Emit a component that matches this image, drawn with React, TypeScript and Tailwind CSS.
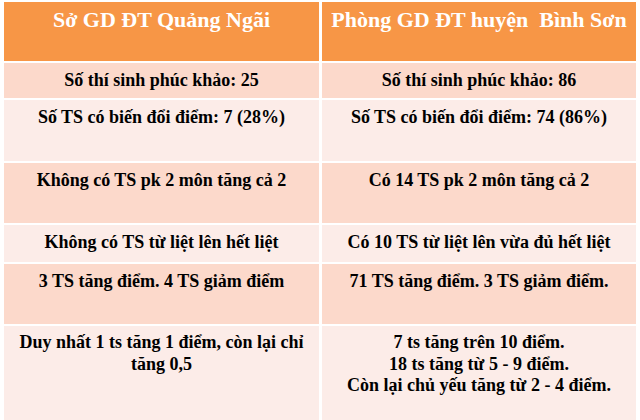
import React from "react";

const dark = "bg-[#fcd9cb]";
const light = "bg-[#fcece8]";

function Cell({ bg, children }: { bg: string; children: React.ReactNode }) {
  return (
    <div className={`${bg} text-center text-black text-[18px] leading-[22px] pt-[6px] px-2`}>
      {children}
    </div>
  );
}

export default function App() {
  return (
    <div className="w-[640px] h-[420px] overflow-hidden bg-white pt-[2px] pl-[4px] font-['Liberation_Serif','Times_New_Roman',serif] font-bold">
      <div className="grid grid-cols-[315px_314px] gap-x-[3px] gap-y-[2px] grid-rows-[59px_35px_61px_60px_37px_60px_100px]">
        <div className="bg-[#f79646] text-white text-center text-[22px] leading-[26px] pt-[5px]">
          Sở GD ĐT Quảng Ngãi
        </div>
        <div className="bg-[#f79646] text-white text-center text-[22px] leading-[26px] pt-[5px]">
          Phòng GD ĐT huyện&nbsp; Bình Sơn
        </div>

        <Cell bg={dark}>Số thí sinh phúc khảo: 25</Cell>
        <Cell bg={dark}>Số thí sinh phúc khảo: 86</Cell>

        <Cell bg={light}>Số TS có biến đổi điểm: 7 (28%)</Cell>
        <Cell bg={light}>Số TS có biến đổi điểm: 74 (86%)</Cell>

        <Cell bg={dark}>Không có TS pk 2 môn tăng cả 2</Cell>
        <Cell bg={dark}>Có 14 TS pk 2 môn tăng cả 2</Cell>

        <Cell bg={light}>Không có TS từ liệt lên hết liệt</Cell>
        <Cell bg={light}>Có 10 TS từ liệt lên vừa đủ hết liệt</Cell>

        <Cell bg={dark}>3 TS tăng điểm. 4 TS giảm điểm</Cell>
        <Cell bg={dark}>71 TS tăng điểm. 3 TS giảm điểm.</Cell>

        <div className={`${light} text-center text-black text-[18px] leading-[21.5px] pt-[6px]`}>
          Duy nhất 1 ts tăng 1 điểm, còn lại chỉ
          <br />
          tăng 0,5
        </div>
        <div className={`${light} text-center text-black text-[18px] leading-[21.5px] pt-[6px]`}>
          7 ts tăng trên 10 điểm.
          <br />
          18 ts tăng từ 5 - 9 điểm.
          <br />
          Còn lại chủ yếu tăng từ 2 - 4 điểm.
        </div>
      </div>
    </div>
  );
}
